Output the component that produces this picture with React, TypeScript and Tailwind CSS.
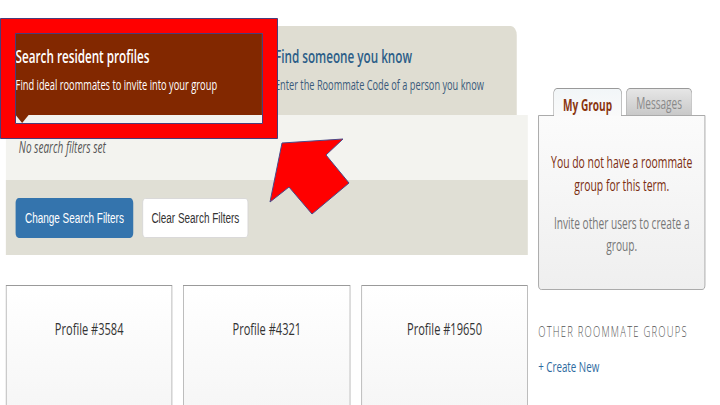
export default function App() {
  return (
    <div className="relative w-[720px] h-[405px] overflow-hidden bg-white font-['Open_Sans',sans-serif]">
      <div className="flex w-[1108px] origin-top-left scale-x-[0.65] pl-[9px] pt-[26px]">
        {/* Main column */}
        <div className="flex w-[803px] flex-col">
          <div className="flex h-[89px] w-[786px]">
            <div className="relative w-[394px] bg-[#822800] pl-[15px] pt-[18px] text-white">
              <div className="text-[18px] font-semibold leading-[25px]">Search resident profiles</div>
              <div className="mt-[6px] text-[14.3px] leading-[20px]">Find ideal roommates to invite into your group</div>
              <div className="absolute left-[15px] top-full h-0 w-0 border-l-[10px] border-r-[10px] border-t-[8px] border-l-transparent border-r-transparent border-t-[#822800]" />
            </div>
            <div className="flex-1 rounded-tr-[9px] bg-[#dfddd2] pl-[20px] pt-[18px]">
              <div className="text-[18px] font-semibold leading-[25px] text-[#2c5d88]">Find someone you know</div>
              <div className="mt-[6px] text-[14.2px] leading-[20px] text-[#3a5a7a]">Enter the Roommate Code of a person you know</div>
            </div>
          </div>
          <div className="h-[65px] bg-[#f3f3ef] pl-[20px] pt-[23px]">
            <div className="text-[15.4px] italic leading-[20px] text-[#555]">No search filters set</div>
          </div>
          <div className="flex h-[75px] items-start gap-[14px] bg-[#e0dfd5] pl-[15px] pt-[18px] font-['Liberation_Sans',sans-serif]">
            <div className="flex h-[40px] w-[181px] items-center justify-center rounded-[5px] bg-[#3474ad] text-[15.3px] text-white">
              Change Search Filters
            </div>
            <div className="flex h-[40px] w-[163px] items-center justify-center rounded-[5px] border border-[#d4d4d4] bg-white text-[15.3px] text-[#333]">
              Clear Search Filters
            </div>
          </div>
          <div className="mt-[30px] grid grid-cols-3 gap-[17px]">
            {["Profile #3584", "Profile #4321", "Profile #19650"].map((p) => (
              <div
                key={p}
                className="h-[150px] border border-[#9a9a9a] bg-gradient-to-b from-white to-[#f4f4f4] pt-[31px] text-center text-[17px] leading-[24px] text-[#333]"
              >
                {p}
              </div>
            ))}
          </div>
        </div>

        {/* Sidebar */}
        <div className="ml-[16px] w-[257px] pt-[62px]">
          <div className="flex h-[27px] items-end gap-[6px] pl-[23px]">
            <div className="relative z-10 -mb-px flex h-[28px] w-[106px] justify-center rounded-t-[6px] border border-b-0 border-[#999] bg-gradient-to-b from-[#f2f6f8] to-[#fafafa] pt-[5px] text-[15.5px] font-bold leading-[22px] text-[#8a3510]">
              My Group
            </div>
            <div className="flex h-[27px] w-[102px] justify-center rounded-t-[6px] border border-b-0 border-[#999] bg-gradient-to-b from-[#e6e6e6] to-[#c9c9c9] pt-[3px] text-[15.5px] leading-[22px] text-[#8a8a8a]">
              Messages
            </div>
          </div>
          <div className="h-[175px] rounded-b-[5px] border border-[#999] bg-gradient-to-b from-[#fbfbfb] to-[#efefef] px-[10px] pt-[35px] text-center">
            <div className="text-[16px] leading-[23px] text-[#7b2d10]">
              You do not have a roommate
              <br />
              group for this term.
            </div>
            <div className="mt-[15px] text-[15.6px] leading-[22px] text-[#777]">
              Invite other users to create a
              <br />
              group.
            </div>
          </div>
          <div className="mt-[32px] text-[14.5px] font-light leading-[20px] tracking-[1.9px] text-[#555]">
            OTHER ROOMMATE GROUPS
          </div>
          <div className="mt-[13px] text-[15px] leading-[22px] text-[#2d6aa0]">+ Create New</div>
        </div>
      </div>

      {/* Annotation overlay */}
      <svg className="pointer-events-none absolute left-0 top-0" width="720" height="405" viewBox="0 0 720 405">
        <path
          d="M0.5 18.5 H277.5 V138.5 H0.5 Z M15.5 33.5 V123.5 H262.5 V33.5 Z"
          fill="#ff0000"
          fillRule="evenodd"
          stroke="#4a3d7a"
          strokeWidth="1"
        />
        <polygon
          points="282,143 343,139 326,155 349,183 312,214 289,187 270,202"
          fill="#ff0000"
          stroke="#4a4a8a"
          strokeWidth="1"
          strokeLinejoin="miter"
        />
      </svg>
    </div>
  );
}
